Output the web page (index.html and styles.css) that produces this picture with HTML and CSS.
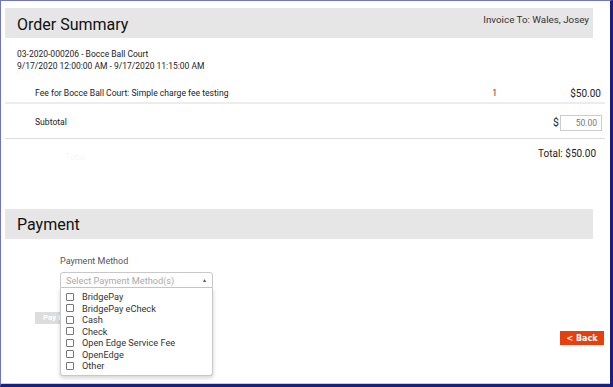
FILE: index.html
```html
<!DOCTYPE html>
<html lang="en">
<head>
    <meta charset="UTF-8">
    <title>Order Summary</title>
    <link rel="stylesheet" href="styles.css">
</head>
<body>
    <div class="frame">
        <div class="content">
            <div class="section-head">
                <h1>Order Summary</h1>
                <span class="invoice-to">Invoice To: Wales, Josey</span>
            </div>
            <div class="order-info">
                <div>03-2020-000206 - Bocce Ball Court</div>
                <div>9/17/2020 12:00:00 AM - 9/17/2020 11:15:00 AM</div>
            </div>
            <div class="line-item">
                <span class="item-desc">Fee for Bocce Ball Court: Simple charge fee testing</span>
                <span class="item-qty">1</span>
                <span class="item-amount">$50.00</span>
            </div>
            <div class="subtotal">
                <span class="item-desc">Subtotal</span>
                <span class="subtotal-input"><span class="dollar">$</span><input type="text" value="50.00"></span>
            </div>
            <div class="total-row">
                <span class="faint">Total</span>
                <span class="total">Total: $50.00</span>
            </div>

            <div class="section-head payment-head">
                <h1>Payment</h1>
            </div>
            <div class="payment-body">
                <label class="field-label">Payment Method</label>
                <div class="select-wrap">
                    <div class="select-box">
                        <span>Select Payment Method(s)</span>
                        <span class="caret">&#9650;</span>
                    </div>
                    <ul class="select-menu">
                        <li><span class="check"></span>BridgePay</li>
                        <li><span class="check"></span>BridgePay eCheck</li>
                        <li><span class="check"></span>Cash</li>
                        <li><span class="check"></span>Check</li>
                        <li><span class="check"></span>Open Edge Service Fee</li>
                        <li><span class="check"></span>OpenEdge</li>
                        <li><span class="check"></span>Other</li>
                    </ul>
                </div>
                <button class="pay-btn">Pay Now</button>
                <div class="back-row">
                    <button class="back-btn">&lt; Back</button>
                </div>
            </div>
        </div>
    </div>
</body>
</html>
```

FILE: styles.css
```css
body {
    margin: 0;
    font-family: Roboto, "Liberation Sans", Arial, sans-serif;
    background-color: #ffffff;
    color: #222222;
}
.frame {
    width: 613px;
    height: 387px;
    box-sizing: border-box;
    border-top: 1px solid #7276b6;
    border-left: 1px solid #7276b6;
    border-right: 3px solid #1b1f7e;
    border-bottom: 3px solid #1b1f7e;
    box-shadow: inset 0 -1px 0 #c8cbe6;
    overflow: hidden;
}
.content {
    padding: 7px 5px 0 4px;
}
.section-head {
    display: flex;
    justify-content: space-between;
    align-items: flex-start;
    height: 30px;
    margin-right: 12px;
    background-color: #e6e6e6;
}
.section-head h1 {
    margin: 0;
    padding: 6px 0 0 12px;
    font-size: 16px;
    font-weight: normal;
    line-height: 22px;
    color: #111111;
}
.invoice-to {
    padding: 6px 4px 0 0;
    font-size: 9.8px;
    color: #333333;
}
.order-info {
    padding: 10px 0 0 12px;
    font-size: 8.5px;
    line-height: 12px;
    height: 36px;
}
.line-item {
    display: flex;
    align-items: center;
    height: 18px;
    border-bottom: 2px solid #ececec;
}
.item-desc {
    padding-left: 30px;
    font-size: 8.6px;
    flex: 1;
}
.item-qty {
    width: 78px;
    font-size: 8.6px;
    color: #8a2a1a;
}
.item-amount {
    padding-right: 4px;
    font-size: 10px;
}
.subtotal {
    display: flex;
    align-items: center;
    height: 32px;
    padding-top: 2px;
    border-bottom: 1px solid #dddddd;
}
.subtotal .item-desc {
    align-self: flex-start;
    padding-top: 11px;
}
.subtotal-input {
    display: flex;
    align-items: center;
    padding-right: 3px;
    padding-top: 1px;
}
.dollar {
    font-size: 10.5px;
    margin-right: 1px;
}
.subtotal-input input {
    width: 42px;
    height: 16px;
    box-sizing: border-box;
    border: 1px solid #cccccc;
    padding: 0 4px;
    font-family: inherit;
    font-size: 8.5px;
    color: #777777;
    text-align: right;
}
.total-row {
    display: flex;
    justify-content: space-between;
    height: 70px;
    padding-top: 9px;
    box-sizing: border-box;
}
.faint {
    padding-left: 60px;
    padding-top: 4px;
    font-size: 9px;
    color: #f8f8f8;
}
.total {
    padding-right: 9px;
    font-size: 10px;
    color: #222222;
}
.payment-head h1 {
    padding-top: 5px;
}
.payment-body {
    position: relative;
    padding-left: 55px;
}
.field-label {
    display: block;
    padding-top: 16px;
    font-size: 9px;
    color: #555555;
    line-height: 12px;
}
.select-wrap {
    position: relative;
    width: 153px;
    margin-top: 5px;
}
.select-box {
    display: flex;
    justify-content: space-between;
    align-items: center;
    height: 16px;
    box-sizing: border-box;
    padding: 0 5px;
    border: 1px solid #c8c8c8;
    border-radius: 3px 3px 0 0;
    font-size: 9.2px;
    color: #aaaaaa;
}
.caret {
    font-size: 5px;
    color: #555555;
}
.select-menu {
    position: absolute;
    top: 16px;
    left: 0;
    width: 153px;
    box-sizing: border-box;
    margin: 0;
    padding: 3px 0 3px 5px;
    list-style: none;
    background-color: #ffffff;
    border: 1px solid #c8c8c8;
    border-top: none;
    border-radius: 0 0 3px 3px;
    box-shadow: 0 2px 4px rgba(0, 0, 0, 0.18);
    z-index: 2;
}
.select-menu li {
    display: flex;
    align-items: center;
    height: 11.5px;
    font-size: 9.2px;
    color: #333333;
}
.check {
    width: 6px;
    height: 6px;
    border: 1px solid #777777;
    border-radius: 1px;
    margin-right: 8px;
}
.pay-btn {
    display: block;
    margin: 24px 0 0 -25px;
    height: 12px;
    padding: 0 8px;
    border: none;
    background-color: #dddddd;
    color: #ffffff;
    font-family: inherit;
    font-size: 8px;
    font-weight: bold;
    line-height: 12px;
}
.back-row {
    display: flex;
    justify-content: flex-end;
    margin-top: 7px;
    padding-right: 1px;
}
.back-btn {
    height: 14px;
    width: 44px;
    padding: 0;
    border: none;
    background-color: #e8400c;
    color: #ffffff;
    font-family: "DejaVu Sans", sans-serif;
    font-size: 8px;
    font-weight: bold;
}
```
